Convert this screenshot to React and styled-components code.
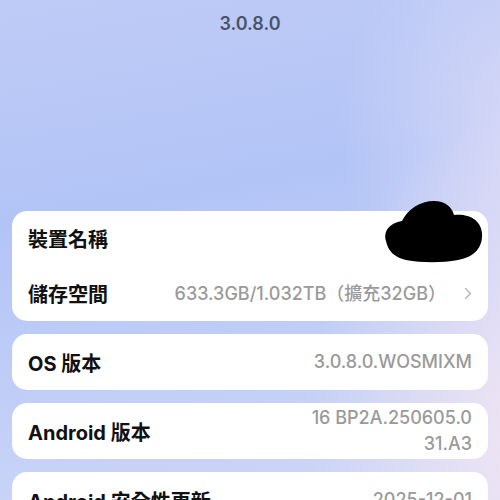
import React from 'react'
import styled, { createGlobalStyle } from 'styled-components'

const Global = createGlobalStyle`
  html, body { margin: 0; padding: 0; }
  body {
    width: 500px;
    height: 500px;
    overflow: hidden;
    font-family: Inter, "Noto Sans CJK TC", sans-serif;
  }
`

const Page = styled.div`
  position: relative;
  width: 500px;
  height: 500px;
  overflow: hidden;
  background:
    radial-gradient(ellipse 340px 430px at 112% 85%, rgba(246, 232, 243, 1), rgba(246, 232, 243, 0) 75%),
    radial-gradient(ellipse 280px 300px at 108% 25%, rgba(222, 220, 247, 0.9), rgba(222, 220, 247, 0) 72%),
    linear-gradient(170deg, #bfcbf6 0%, #b2c4f6 38%, #bfcdf7 65%, #cfd7f6 100%);
`

const Header = styled.div`
  height: 211px;
  display: flex;
  justify-content: center;
  padding-top: 11px;
  box-sizing: border-box;
`

const Version = styled.div`
  font-size: 18px;
  font-weight: 600;
  color: #4a5368;
  line-height: 26px;
`

const List = styled.div`
  display: flex;
  flex-direction: column;
  gap: 13px;
  padding: 0 12px;
`

const Card = styled.div`
  background: #fff;
  border-radius: 15px;
  display: flex;
  flex-direction: column;
`

const Row = styled.div`
  display: flex;
  align-items: center;
  justify-content: space-between;
  min-height: ${p => p.$h || 55}px;
  padding: 0 16px;
  gap: 16px;
`

const Label = styled.div`
  font-size: 20px;
  font-weight: 700;
  color: #111;
  white-space: nowrap;
`

const Value = styled.div`
  display: flex;
  align-items: center;
  gap: 18px;
  font-size: 18px;
  font-weight: 500;
  color: #9a9a9a;
  text-align: right;
  line-height: 26px;
  white-space: nowrap;
`

const Chevron = () => (
  <svg width="8" height="13" viewBox="0 0 8 13" fill="none">
    <path d="M1.5 1.5 L6.5 6.5 L1.5 11.5" stroke="#b4b4b4" strokeWidth="1.4" strokeLinecap="round" strokeLinejoin="round" />
  </svg>
)

const Redaction = styled.svg`
  position: absolute;
  left: 382px;
  top: 199px;
`

export default function App() {
  return (
    <Page>
      <Global />
      <Header>
        <Version>3.0.8.0</Version>
      </Header>
      <List>
        <Card>
          <Row>
            <Label>裝置名稱</Label>
          </Row>
          <Row>
            <Label>儲存空間</Label>
            <Value>
              633.3GB/1.032TB（擴充32GB）
              <Chevron />
            </Value>
          </Row>
        </Card>
        <Card>
          <Row $h={56}>
            <Label>OS 版本</Label>
            <Value>3.0.8.0.WOSMIXM</Value>
          </Row>
        </Card>
        <Card>
          <Row $h={56}>
            <Label>Android 版本</Label>
            <Value>16 BP2A.250605.0<br />31.A3</Value>
          </Row>
        </Card>
        <Card>
          <Row $h={56}>
            <Label>Android 安全性更新</Label>
            <Value>2025-12-01</Value>
          </Row>
        </Card>
      </List>
      <Redaction width="102" height="66" viewBox="0 0 102 66">
        <path
          d="M4 42 C1 32 8 24 20 22 C26 10 38 2 52 2 C63 2 70 8 72 16 C85 14 99 20 100 34 C101 48 93 58 76 61 C60 64 40 64 24 61 C12 58 6 52 4 42 Z"
          fill="#000"
        />
      </Redaction>
    </Page>
  )
}
